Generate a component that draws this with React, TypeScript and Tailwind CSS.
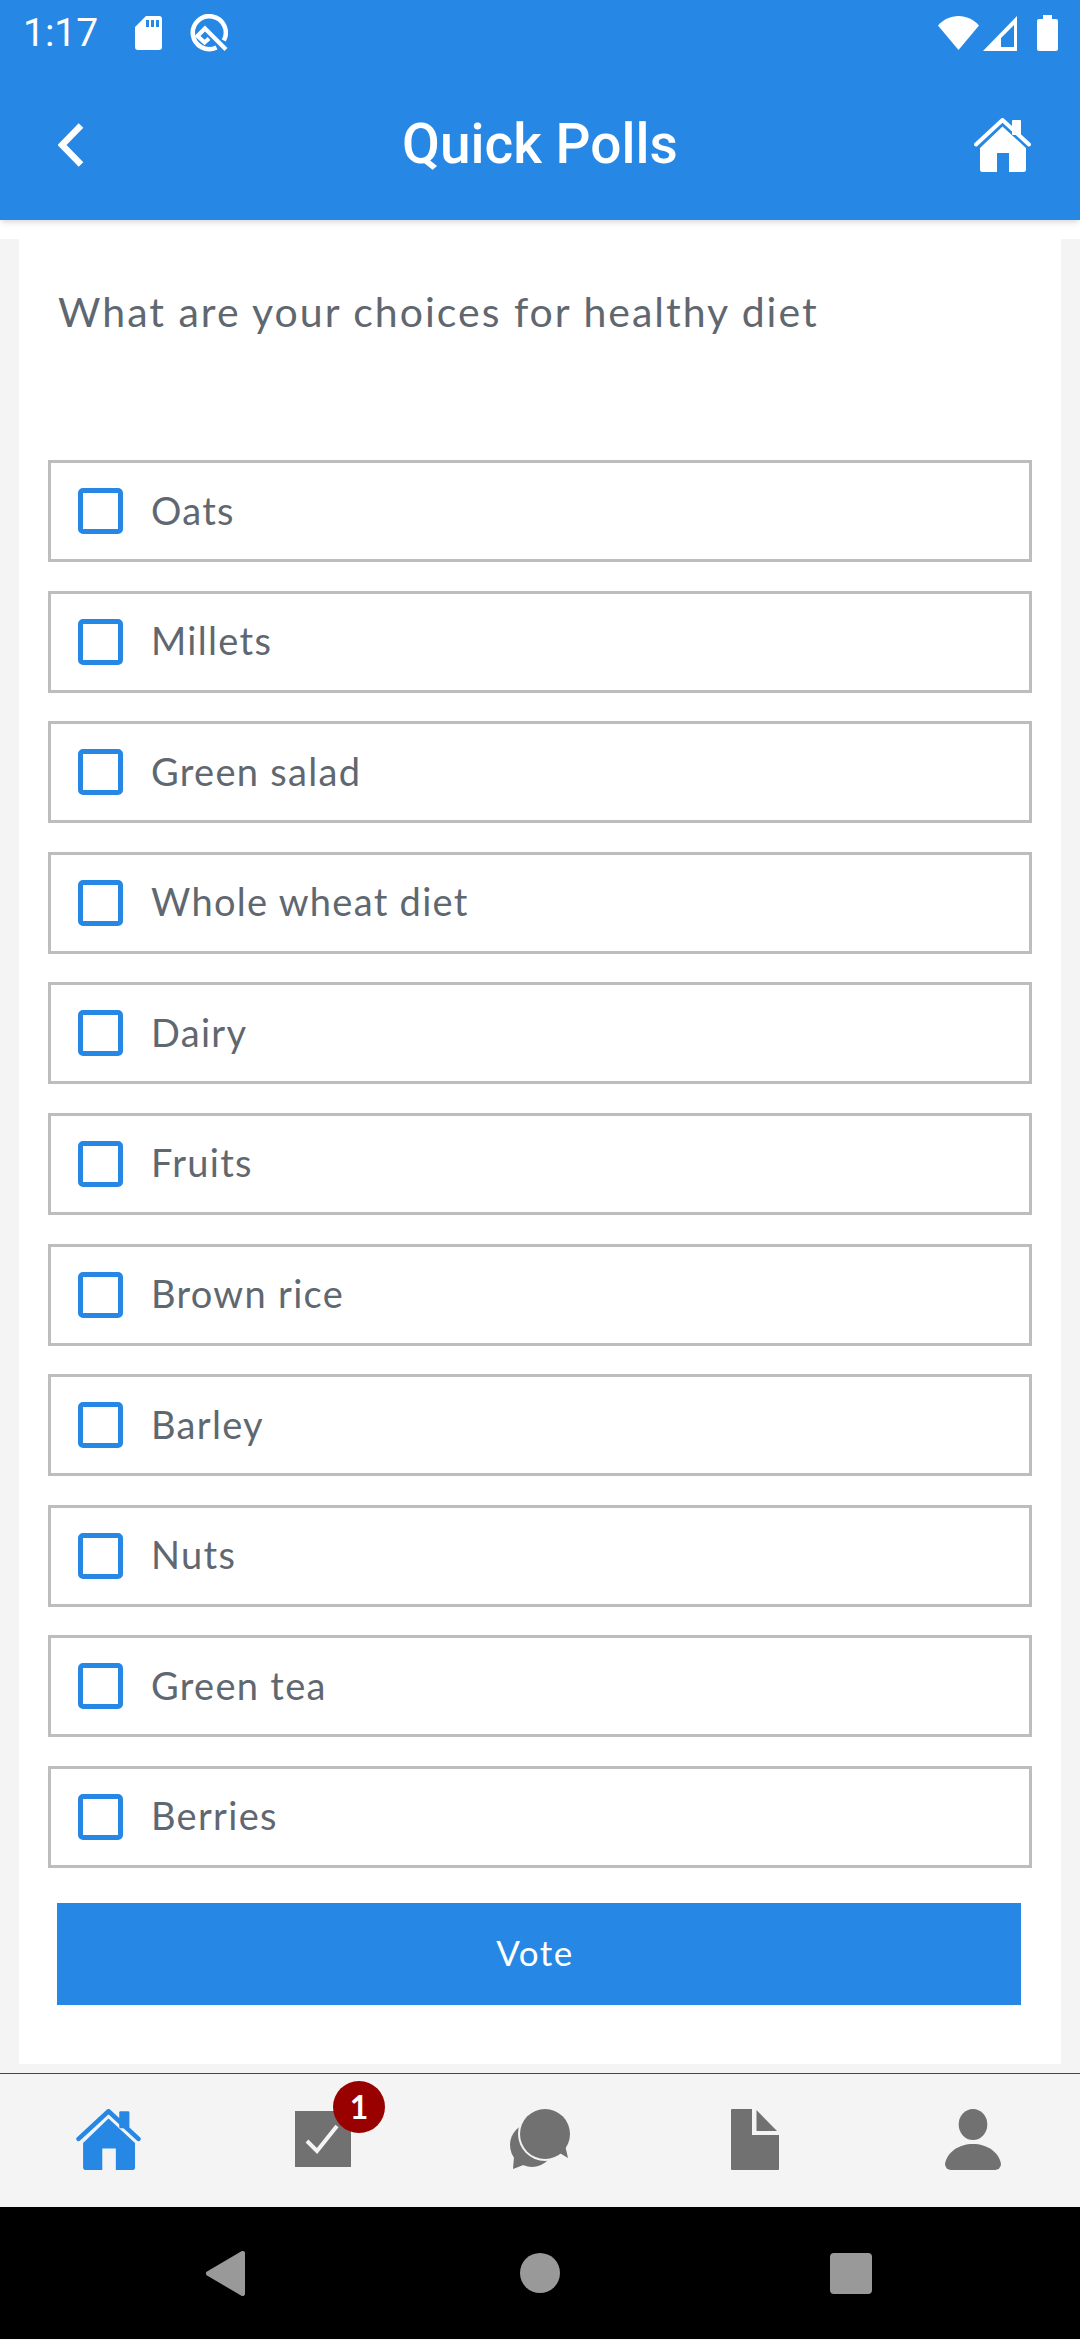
const options = [
  "Oats",
  "Millets",
  "Green salad",
  "Whole wheat diet",
  "Dairy",
  "Fruits",
  "Brown rice",
  "Barley",
  "Nuts",
  "Green tea",
  "Berries",
];

const HomeIcon = ({ className }: { className: string }) => (
  <svg viewBox="0 0 57 54" className={className} fill="currentColor">
    <rect x="38" y="2" width="9" height="15" rx="1" />
    <path
      d="M2 26.5 28.5 2 55 26.5"
      fill="none"
      stroke="currentColor"
      strokeWidth="4"
      strokeLinecap="round"
      strokeLinejoin="round"
    />
    <path d="M28.5 8.5 52 30v21.5a2.5 2.5 0 0 1-2.5 2.5H35V35H23v19H8.500a2.500 2.500 0 0 1-2.500-2.500V30Z" />
  </svg>
);

const StatusBar = () => (
  <div className="flex h-[66px] items-center pl-[23px] pr-[22px] text-white">
    <span className="font-['Roboto'] text-[39px] leading-none">1:17</span>
    {/* sd card */}
    <svg viewBox="0 0 27 34" className="ml-[37px] h-[34px] w-[27px]" fill="currentColor">
      <path
        fillRule="evenodd"
        d="M11 0h13a3 3 0 0 1 3 3v28a3 3 0 0 1-3 3H3a3 3 0 0 1-3-3V11ZM11 4v7h3V4Zm5 0v7h3V4Zm5 0v7h3V4Z"
      />
    </svg>
    {/* q badge */}
    <svg viewBox="0 0 38 38" className="ml-[28px] h-[38px] w-[38px]" fill="none" stroke="currentColor">
      <path d="M26.500 33.500A16.500 16.500 0 1 1 33.800 26.500" strokeWidth="4.500" />
      <path d="M36 35.500 15 14.500 7.500 22 14.500 28.500 19 24.500" strokeWidth="4.200" />
    </svg>
    <div className="ml-auto flex items-center">
      {/* wifi */}
      <svg viewBox="0 0 41 34" className="h-[34px] w-[41px]" fill="currentColor">
        <path d="M0 9.500C5.500 3.500 12.500 0 20.500 0S35.500 3.500 41 9.500L20.500 34Z" />
      </svg>
      {/* signal */}
      <svg viewBox="0 0 34 35" className="ml-[4px] h-[35px] w-[34px]" fill="currentColor">
        <path
          fillRule="evenodd"
          d="M34 0v35H0ZM18 31h13V9L18 22Z"
        />
      </svg>
      {/* battery */}
      <svg viewBox="0 0 21 36" className="ml-[20px] h-[36px] w-[21px]" fill="currentColor">
        <path d="M6 0h9v4h4a2 2 0 0 1 2 2v28a2 2 0 0 1-2 2H2a2 2 0 0 1-2-2V6a2 2 0 0 1 2-2h4Z" />
      </svg>
    </div>
  </div>
);

const OptionRow = ({ label }: { label: string }) => (
  <label className="flex h-[102px] items-center border-[3px] border-[#bdbdbd] pl-[27px]">
    <span className="h-[46px] w-[45px] shrink-0 rounded-[5px] border-[5px] border-[#2688e4]" />
    <span className="mb-[3px] ml-[28px] font-['Lato'] text-[38px] leading-none tracking-[1.3px] text-[#5f6770]">
      {label}
    </span>
  </label>
);

const BottomNav = () => (
  <nav className="grid h-[134px] grid-cols-5 justify-items-center border-t border-[#0a7010] bg-[#f4f4f4] pt-[35px]">
    <HomeIcon className="h-[61px] w-[65px] text-[#2688e4]" />

    <div className="relative ml-[-2px] h-[56px] w-[56px] translate-y-[2px] bg-[#717171]">
      <svg viewBox="0 0 56 56" className="h-[56px] w-[56px]" fill="none">
        <path d="M12 30 22 40 42 15" stroke="#f4f4f4" strokeWidth="4" />
      </svg>
      <span className="absolute left-[38px] top-[-30px] flex h-[52px] w-[52px] items-center justify-center rounded-full bg-[#990000] font-['Lato'] text-[32px] font-bold text-white">
        1
      </span>
    </div>

    {/* chat */}
    <svg viewBox="0 0 61 60" className="h-[60px] w-[61px]" fill="#717171">
      <circle cx="22" cy="36" r="22" />
      <path d="M3 60 16 55 4 48Z" />
      <circle cx="35" cy="25" r="27" fill="#f4f4f4" />
      <circle cx="35" cy="25" r="25" />
      <path d="M48 43 58 49 55 36Z" />
    </svg>

    {/* document */}
    <svg viewBox="0 0 48 61" className="ml-[-2px] h-[61px] w-[48px]" fill="#717171">
      <path d="M1 0h20v26h27v34a1 1 0 0 1-1 1H1a1 1 0 0 1-1-1V1a1 1 0 0 1 1-1Z" />
      <path d="M25.500 1 46 22H25.500Z" />
    </svg>

    {/* profile */}
    <svg viewBox="0 0 56 61" className="ml-[2px] h-[61px] w-[56px]" fill="#717171">
      <ellipse cx="28" cy="15.500" rx="14.300" ry="15.500" />
      <path d="M0 55C2 43 14 35 28 35S54 43 56 55a6 6 0 0 1-6 6H6a6 6 0 0 1-6-6Z" />
    </svg>
  </nav>
);

const SystemNav = () => (
  <div className="grid h-[132px] grid-cols-3 items-center justify-items-center bg-black">
    <svg viewBox="0 0 39 45" className="ml-[90px] h-[45px] w-[39px]" fill="#999999">
      <path d="M1 20.500 35 .5A2.500 2.500 0 0 1 39 3v39a2.500 2.500 0 0 1-4 2.500L1 24.500a2.300 2.300 0 0 1 0-4Z" />
    </svg>
    <div className="h-[40px] w-[40px] rounded-full bg-[#999999]" />
    <div className="mr-[98px] h-[41px] w-[42px] rounded-[4px] bg-[#999999]" />
  </div>
);

const App = () => {
  return (
    <div className="flex h-[2340px] w-[1080px] flex-col overflow-hidden bg-[#f4f4f4]">
      <header className="relative z-10 h-[220px] bg-[#2688e4] shadow-md">
        <StatusBar />
        <div className="grid h-[154px] grid-cols-[1fr_auto_1fr] items-center px-[49px] pt-[3px] text-white">
          <svg viewBox="0 0 26 44" className="ml-[9px] h-[44px] w-[26px]" fill="none">
            <path d="M23 2.500 4 22l19 19.500" stroke="currentColor" strokeWidth="6.500" />
          </svg>
          <h1 className="font-['Roboto'] text-[55px] font-medium leading-none">Quick Polls</h1>
          <HomeIcon className="h-[54px] w-[57px] justify-self-end" />
        </div>
      </header>
      <div className="h-[19px] shrink-0 bg-white" />

      <main className="mx-[19px] flex h-[1825px] shrink-0 flex-col bg-white">
        <h2 className="pl-[39px] pt-[49px] font-['Lato'] text-[41px] leading-[48px] tracking-[2px] text-[#5f6770]">
          What are your choices for healthy diet
        </h2>
        <div className="mx-[29px] mt-[124px] flex flex-col gap-[28.6px]">
          {options.map((item) => (
            <OptionRow key={item} label={item} />
          ))}
        </div>
        <button className="ml-[38px] mt-[35px] h-[102px] w-[964px] bg-[#2688e4] pb-[3px] pr-[8px] font-['Lato'] text-[35px] tracking-[1.5px] text-white">
          Vote
        </button>
      </main>

      <div className="h-[9px] shrink-0" />
      <BottomNav />
      <SystemNav />
    </div>
  );
};

export default App;
